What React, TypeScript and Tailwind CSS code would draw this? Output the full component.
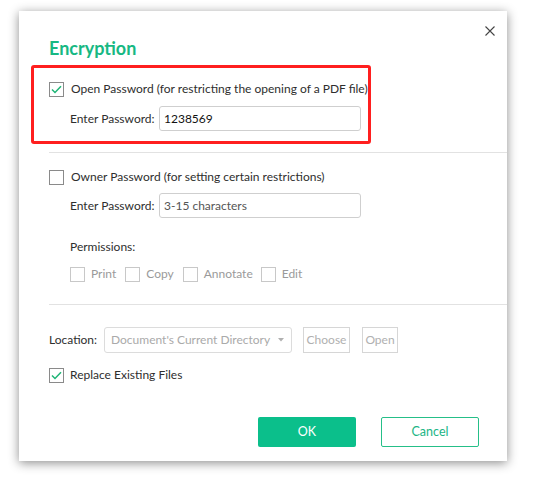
import React from "react";

const Check = ({ checked, disabled }: { checked?: boolean; disabled?: boolean }) => (
  <span
    className={`flex h-[15px] w-[15px] shrink-0 items-center justify-center border bg-white ${
      disabled ? "border-[#c8c8c8]" : "border-[#8a8a8a]"
    }`}
  >
    {checked && (
      <svg width="11" height="9" viewBox="0 0 11 9">
        <path d="M1 4.5 L4 7.5 L10 1.2" fill="none" stroke="#1fb576" strokeWidth="1.5" />
      </svg>
    )}
  </span>
);

export default function App() {
  return (
    <div
      className="h-[479px] w-[535px] overflow-hidden whitespace-nowrap bg-white pl-[19px] pt-[11px] text-[12px] leading-[18px] text-[#2e2e2e]"
      style={{ fontFamily: 'Lato, "Open Sans", sans-serif' }}
    >
      <div className="relative flex h-[450px] w-[488px] flex-col bg-white shadow-[0_2px_10px_rgba(0,0,0,0.45)]">
        <button className="absolute right-[12px] top-[15px]">
          <svg width="10" height="10" viewBox="0 0 10 10">
            <path d="M0.5 0.5 L9.5 9.5 M9.5 0.5 L0.5 9.5" stroke="#444" strokeWidth="1.1" />
          </svg>
        </button>
        <h1 className="ml-[30px] mt-[25px] h-[24px] text-[18px] font-bold leading-[24px] text-[#17b883]">
          Encryption
        </h1>

        <div className="ml-[12px] mt-[5px] h-[79px] w-[340px] rounded-[3px] border-[3px] border-[#ff1f1f] pl-[15px] pt-[12px]">
          <div className="flex h-[18px] items-center gap-[7px]">
            <Check checked />
            <span>Open Password (for restricting the opening of a PDF file)</span>
          </div>
          <div className="ml-[21px] mt-[8px] flex items-center">
            <span className="w-[89px] shrink-0">Enter Password:</span>
            <div className="flex h-[25px] w-[202px] items-center rounded-[3px] border border-[#cfcfcf] px-[4px] text-[#111]">
              1238569
            </div>
          </div>
        </div>

        <div className="ml-[30px] mt-[8px] h-px bg-[#e2e2e2]" />

        <div className="ml-[30px] mt-[15px] flex h-[18px] items-center gap-[7px]">
          <Check />
          <span>Owner Password (for setting certain restrictions)</span>
        </div>
        <div className="ml-[51px] mt-[7px] flex items-center">
          <span className="w-[89px] shrink-0">Enter Password:</span>
          <div className="flex h-[25px] w-[202px] items-center rounded-[3px] border border-[#cfcfcf] px-[4px] text-[#555]">
            3-15 characters
          </div>
        </div>
        <div className="ml-[51px] mt-[20px] h-[18px]">Permissions:</div>
        <div className="ml-[51px] mt-[9px] flex h-[18px] items-center text-[#9a9a9a]">
          <Check disabled />
          <span className="ml-[6px] mr-[9px]">Print</span>
          <Check disabled />
          <span className="ml-[6px] mr-[9px]">Copy</span>
          <Check disabled />
          <span className="ml-[6px] mr-[8px]">Annotate</span>
          <Check disabled />
          <span className="ml-[6px]">Edit</span>
        </div>

        <div className="ml-[30px] mt-[21px] h-px bg-[#e2e2e2]" />

        <div className="ml-[30px] mt-[22px] flex items-center">
          <span className="w-[55px] shrink-0">Location:</span>
          <div className="flex h-[26px] w-[188px] items-center justify-between rounded-[3px] border border-[#dcdcdc] pl-[6px] pr-[7px] text-[#aaa]">
            <span>Document's Current Directory</span>
            <svg width="6" height="4" viewBox="0 0 6 4">
              <path d="M0 0 L6 0 L3 3.5 Z" fill="#b0b0b0" />
            </svg>
          </div>
          <div className="ml-[11px] flex h-[26px] w-[47px] items-center justify-center border border-[#d6d6d6] text-[#b0b0b0]">
            Choose
          </div>
          <div className="ml-[12px] flex h-[26px] w-[36px] items-center justify-center border border-[#d6d6d6] text-[#b0b0b0]">
            Open
          </div>
        </div>

        <div className="ml-[30px] mt-[13px] flex h-[18px] items-center gap-[6px]">
          <Check checked />
          <span>Replace Existing Files</span>
        </div>

        <div className="ml-[239px] mt-[33px] flex gap-[25px]">
          <button className="flex h-[30px] w-[98px] items-center justify-center rounded-[2px] bg-[#0bbf8b] text-[12.5px] text-white">
            OK
          </button>
          <button className="flex h-[30px] w-[98px] items-center justify-center rounded-[2px] border border-[#25bf88] text-[12.5px] text-[#1bb585]">
            Cancel
          </button>
        </div>
      </div>
    </div>
  );
}
